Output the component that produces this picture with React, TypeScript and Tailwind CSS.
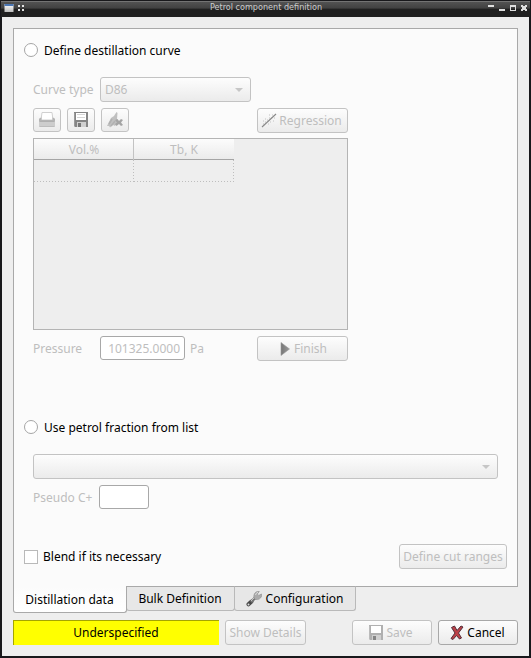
import type { ReactNode } from "react";

function Button({ className = "", disabled = true, children }: { className?: string; disabled?: boolean; children?: ReactNode }) {
  return (
    <button
      className={`flex shrink-0 items-center justify-center whitespace-nowrap rounded-[3px] border bg-linear-to-b from-[#fdfdfd] to-[#ebebeb] ${
        disabled ? "border-[#c3c3c3] text-[#bebebe]" : "border-[#a8a8a8] text-black"
      } ${className}`}
    >
      {children}
    </button>
  );
}

function Arrow() {
  return (
    <svg width="8" height="4" viewBox="0 0 8 4" className="shrink-0">
      <path d="M0 0H8L4 4Z" fill="#c6c6c6" />
    </svg>
  );
}

function Printer() {
  return (
    <svg width="16" height="16" viewBox="0 0 16 16">
      <path d="M3 .5H13L14 8H2Z" fill="#fff" stroke="#d0d0d0" />
      <path d="M0 7Q.5 5.500 2.500 5.500V8H13.500V5.500Q15.500 5.500 16 7V10H0Z" fill="#b5b5b5" />
      <rect x="0" y="9" width="16" height="6" rx="1" fill="#cdcdcd" />
      <path d="M.5 9.500H15.500" stroke="#b0b0b0" />
      <path d="M.5 14.500H15.500" stroke="#bcbcbc" />
    </svg>
  );
}

function Floppy({ light = false }: { light?: boolean }) {
  const body = light ? "#b0b0b0" : "#858585";
  return (
    <svg width="16" height="16" viewBox="0 0 16 16" className="shrink-0">
      <path d="M1 0H15V15H2L1 14Z" fill={body} />
      <rect x="3" y="1" width="10" height="7" fill="#fff" />
      {!light && <path d="M4 2.500H12M4 5.500H12" stroke="#d5d5d5" />}
      <rect x="4" y="10" width="9" height="5" fill="#d0d0d0" />
      <rect x="5" y="11" width="3" height="4" fill={light ? "#858585" : "#777"} />
      <path d="M1.500 1V14" stroke={light ? "#bbb" : "#9a9a9a"} />
    </svg>
  );
}

function Broom() {
  return (
    <svg width="18" height="16" viewBox="0 0 18 16">
      <path d="M10.500 0L11.500 1L11 7L12 10L9 14L7 13L4 15.500L3 14L1 14L5 6L8 4Z" fill="#c0c0c0" />
      <path d="M3 12L6 7M5 14L9 9" stroke="#b0b0b0" strokeWidth="1.500" />
      <path d="M9 8L11.500 7L13 9L15 7L17 8L15 10.500L17 13L15 14L13 12L10.500 14L9 12L11 10.500Z" fill="#a4a4a4" />
    </svg>
  );
}

function Scatter() {
  return (
    <svg width="16" height="16" viewBox="0 0 16 16" className="shrink-0">
      <path d="M2 8h1M4 6h1M6 7h1M8 5h1M8 2h1M11 2h1M4 9h1M7 11h1M9 9h1M12 8h1M13 5h1M10 5h1M2 11h1" stroke="#c2c2c2" strokeWidth="1.200" />
      <path d="M1 14L15 1" stroke="#888" strokeWidth="1.100" />
    </svg>
  );
}

function Wrench() {
  return (
    <svg width="16" height="16" viewBox="0 0 16 16" className="shrink-0">
      <path d="M2.500 13.300L5.500 10.500" stroke="#484848" strokeWidth="4" strokeLinecap="round" />
      <path d="M5 11L10 6" stroke="#777" strokeWidth="3" />
      <path d="M5 10L9.500 5.500" stroke="#c5c5c5" />
      <path d="M8 7Q7 2 11.500 .3L13.300 .5L11.300 3L12.700 4.400L15.500 3L15.800 4.800Q14 9.300 9.500 8.500Z" fill="#aaa" stroke="#8b8b8b" strokeWidth=".6" />
      <path d="M9.500 4Q10 2 12 1" fill="none" stroke="#ddd" />
      <circle cx="2.500" cy="13.500" r="1" fill="#ddd" />
    </svg>
  );
}

function RedCross() {
  return (
    <svg width="14" height="16" viewBox="0 0 14 16" className="shrink-0">
      <path d="M1.500 2.500L4.500 1L7 5.500L11 1L13 2L8.500 8L11.500 13L9.500 14L6.500 10.500L3 14.500L1 13.500L5 8Z" fill="#bd4148" stroke="#55303a" />
    </svg>
  );
}

function Radio({ label }: { label: string }) {
  return (
    <label className="ml-2.5 flex h-[14px] items-center gap-1.5 text-black">
      <span className="size-[14px] rounded-full border border-[#a5a5a5] bg-white" />
      <span className="pt-px">{label}</span>
    </label>
  );
}

function EmptyCell() {
  return (
    <div className="flex h-[22px] w-[100px] flex-col">
      <span className="h-[21px] w-px self-end bg-[repeating-linear-gradient(to_bottom,#bebebe_0_1px,transparent_1px_3px)]" />
      <span className="h-px bg-[repeating-linear-gradient(to_right,#bebebe_0_1px,transparent_1px_3px)]" />
    </div>
  );
}

export default function App() {
  return (
    <div className="flex h-[658px] w-[531px] flex-col overflow-hidden bg-[#18181b] font-['Noto_Sans','Liberation_Sans',sans-serif] text-[12px] leading-[14px] text-[#bebebe]">
      <header className="flex h-[17px] shrink-0 items-start border-x border-t border-[#18181b] bg-linear-to-b from-[#555] from-0% via-[#414141] via-45% to-[#202020] to-50% pl-[3px] pr-[3px] pt-px shadow-[inset_0_1px_0_#737373]">
        <svg width="21" height="11" viewBox="0 0 21 11">
          <defs>
            <linearGradient id="windowFill" x2="0" y2="1">
              <stop stopColor="#fff" />
              <stop offset="1" stopColor="#bcbcbc" />
            </linearGradient>
          </defs>
          <rect x=".5" y="2" width="9" height="8" fill="url(#windowFill)" />
          <rect x=".5" y="2" width="9" height="2" fill="#4b77b5" />
          <path d="M14 4h2M18 4h2M14 8h2M18 8h2" stroke="#e4e4e4" strokeWidth="2" />
        </svg>
        <h1 className="-mt-px flex-1 pl-5 text-center font-['DejaVu_Sans_Condensed','DejaVu_Sans',sans-serif] text-[9px] leading-[12px] text-[#cdcdcd]">
          Petrol component definition
        </h1>
        <svg width="40" height="12" viewBox="0 0 40 12">
          <path d="M1 4h6M12 8h6" stroke="#dedede" strokeWidth="2" />
          <path d="M23 3h6v6h-6zM24 5v3h4V5z" fill="#dedede" fillRule="evenodd" />
          <path d="M34 3h2v1h2V3h2v2h-1v2h1v2h-2V8h-2v1h-2V7h1V5h-1z" fill="#dedede" />
        </svg>
      </header>

      <main className="mx-[2px] flex h-[639px] shrink-0 flex-col bg-[#eee] px-[11px] pt-[11px]">
        <section className="flex h-[559px] w-[505px] shrink-0 flex-col border border-[#a9a9a9] bg-[#fbfbfb] pt-[14px]">
          <Radio label="Define destillation curve" />

          <div className="ml-[19px] mt-5 w-[315px]">
            <div className="flex h-[25px] items-center">
              <span className="w-[67px]">Curve type</span>
              <Button className="h-[25px] w-[151px] justify-between! pl-1 pr-[7px]">
                D86
                <Arrow />
              </Button>
            </div>
            <div className="mt-1.5 flex h-[25px] items-start gap-1.5">
              <Button className="h-6 w-7"><Printer /></Button>
              <Button className="h-6 w-7"><Floppy /></Button>
              <Button className="h-6 w-7"><Broom /></Button>
              <Button className="ml-auto h-[25px] w-[91px] gap-0.5 pr-0.5"><Scatter />Regression</Button>
            </div>

            <div className="mt-[5px] h-[192px] border border-[#b4b4b4] bg-[#eee]">
              <div className="grid h-[21px] w-[200px] grid-cols-2 border-b border-[#a5a5a5] bg-linear-to-b from-[#fcfcfc] to-[#ebebeb] text-center leading-[21px]">
                <span className="border-r border-[#c3c3c3] pl-px">Vol.%</span>
                <span>Tb, K</span>
              </div>
              <div className="flex">
                <EmptyCell />
                <EmptyCell />
              </div>
            </div>

            <div className="mt-1.5 flex h-[25px] items-start">
              <span className="w-[67px] leading-[25px]">Pressure</span>
              <div className="h-6 w-[85px] rounded-[3px] border border-[#a8a8a8] bg-white pr-1 text-right leading-[23px]">101325.0000</div>
              <span className="ml-[5px] leading-[25px]">Pa</span>
              <Button className="ml-auto h-[25px] w-[91px] gap-1 pl-0.5">
                <svg width="10" height="14" viewBox="0 0 10 14">
                  <defs>
                    <linearGradient id="playFill" x2="1">
                      <stop stopColor="#777" />
                      <stop offset="1" stopColor="#999" />
                    </linearGradient>
                  </defs>
                  <path d="M1 .5L9.500 7L1 13.500Z" fill="url(#playFill)" stroke="#999" strokeWidth=".6" />
                </svg>
                Finish
              </Button>
            </div>
          </div>

          <div className="mt-[59px]"><Radio label="Use petrol fraction from list" /></div>
          <Button className="ml-[19px] mt-5 h-[25px] w-[465px] justify-end! pr-[7px]"><Arrow /></Button>
          <div className="ml-[19px] mt-1.5 flex h-6 items-center">
            <span className="w-[66px] pt-0.5">Pseudo C+</span>
            <div className="h-6 w-[50px] rounded-[3px] border border-[#a8a8a8] bg-white" />
          </div>

          <div className="ml-2.5 mr-2.5 mt-[35px] flex h-[25px] items-center justify-between">
            <label className="flex items-center gap-[5px] text-black">
              <span className="size-[14px] border border-[#b9b9b9] bg-white" />
              Blend if its necessary
            </label>
            <Button className="h-[25px] w-[108px]">Define cut ranges</Button>
          </div>
        </section>

        <nav className="-mt-px flex h-[27px] shrink-0 items-start text-black">
          <div className="z-10 h-[27px] w-[114px] rounded-b-[3px] border border-t-0 border-[#a9a9a9] bg-linear-to-b from-[#fbfbfb] to-white pr-px text-center leading-[27px]">Distillation data</div>
          <div className="-ml-px h-[25px] w-[109px] rounded-b-[3px] border border-[#b9b9b9] border-t-[#a9a9a9] bg-[#e7e7e7] pr-px text-center leading-[23px]">Bulk Definition</div>
          <div className="-ml-px flex h-[25px] w-[122px] items-center justify-center gap-1 rounded-b-[3px] border border-[#b9b9b9] border-t-[#a9a9a9] bg-[#e7e7e7] pr-px"><Wrench />Configuration</div>
        </nav>

        <footer className="mt-[7px] flex h-[25px] shrink-0">
          <div className="h-[25px] w-[206px] border-l border-t border-[#a5a500] bg-[#ff0] pr-px text-center leading-[24px] text-black">Underspecified</div>
          <Button className="ml-1.5 h-[25px] w-[81px]">Show Details</Button>
          <Button className="ml-auto h-[25px] w-20 gap-0.5 pr-[3px]"><Floppy light />Save</Button>
          <Button disabled={false} className="ml-1.5 h-[25px] w-20 gap-[3px] pr-px"><RedCross />Cancel</Button>
        </footer>
      </main>
    </div>
  );
}
